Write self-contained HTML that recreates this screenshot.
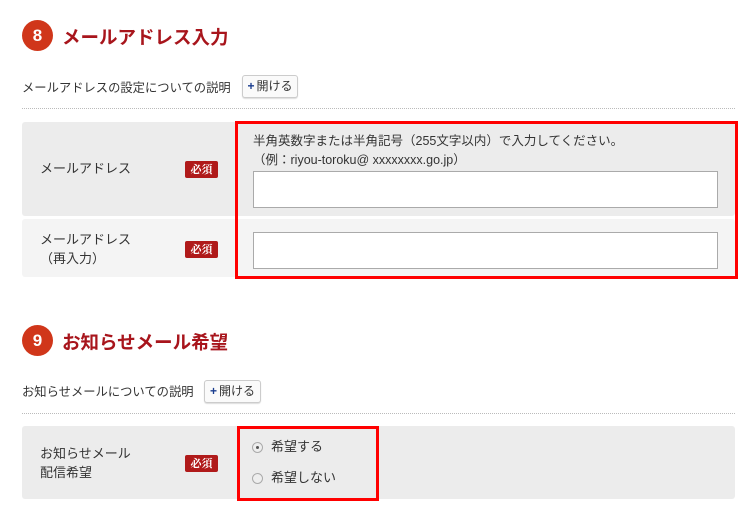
<!DOCTYPE html><html><head><meta charset="utf-8"><style>
body{margin:0;width:750px;height:514px;background:#fff;font-family:"Liberation Sans","Noto Sans CJK JP",sans-serif;color:#333;position:relative;overflow:hidden}
.a{position:absolute}
.c{width:31px;height:31px;border-radius:50%;background:#d0361a;color:#fff;font-weight:bold;font-size:17px;text-align:center;line-height:31px}
.t{color:#a8151c;font-weight:bold;font-size:18.5px;white-space:nowrap}
.d{font-size:12.3px;white-space:nowrap}
.b{border:1px solid #ccc;border-radius:3px;background:#fafafa;font-size:12px;height:21px;line-height:21px;text-align:center;box-shadow:0 1px 1px #ddd}
.b span{color:#1a3d8f;font-weight:bold;margin-right:2px}
.dot{left:22px;width:713px;border-top:1px dotted #bbb}
.badge{background:#b01a1a;color:#fff;font-size:11px;font-weight:bold;width:33px;height:17px;line-height:17px;text-align:center;border-radius:2px;font-family:"Noto Serif CJK SC",serif}
.lab{font-size:13px;line-height:19px}
.in{background:#fff;border:1px solid #aaa;left:253px;width:463px;height:35px}
.red{border:3px solid #f00;box-sizing:border-box}
.r{width:9px;height:9px;border-radius:50%;border:1px solid #aaa;background:#eee}
</style></head><body>
<div class="a c" style="left:22px;top:20px">8</div>
<div class="a t" style="left:62px;top:24px">メールアドレス入力</div>
<div class="a d" style="left:22px;top:78px">メールアドレスの設定についての説明</div>
<div class="a b" style="left:242px;top:75px;width:54px"><span>+</span>開ける</div>
<div class="a dot" style="top:108px"></div>
<div class="a" style="left:22px;top:122px;width:713px;height:94px;background:#ececec;border-radius:3px"></div>
<div class="a" style="left:22px;top:219px;width:713px;height:58px;background:#f4f4f4;border-radius:3px"></div>
<div class="a lab" style="left:40px;top:159px">メールアドレス</div>
<div class="a badge" style="left:185px;top:161px">必須</div>
<div class="a lab" style="left:40px;top:230px">メールアドレス<br>（再入力）</div>
<div class="a badge" style="left:185px;top:241px">必須</div>
<div class="a lab" style="left:253px;top:132px;font-size:12.5px">半角英数字または半角記号（255文字以内）で入力してください。<br>（例：riyou-toroku@ xxxxxxxx.go.jp）</div>
<div class="a in" style="top:171px"></div>
<div class="a in" style="top:232px"></div>
<div class="a red" style="left:235px;top:121px;width:503px;height:158px"></div>
<div class="a c" style="left:22px;top:325px">9</div>
<div class="a t" style="left:62px;top:329px">お知らせメール希望</div>
<div class="a d" style="left:22px;top:382px">お知らせメールについての説明</div>
<div class="a b" style="left:204px;top:380px;width:55px"><span>+</span>開ける</div>
<div class="a dot" style="top:413px"></div>
<div class="a" style="left:22px;top:426px;width:713px;height:73px;background:#ececec;border-radius:3px"></div>
<div class="a lab" style="left:40px;top:444px">お知らせメール<br>配信希望</div>
<div class="a badge" style="left:185px;top:455px">必須</div>
<div class="a r" style="left:252px;top:442px"><div style="width:3px;height:3px;background:#555;border-radius:50%;margin:3px"></div></div>
<div class="a lab" style="left:271px;top:437px">希望する</div>
<div class="a r" style="left:252px;top:473px"></div>
<div class="a lab" style="left:271px;top:468px">希望しない</div>
<div class="a red" style="left:237px;top:426px;width:142px;height:75px"></div>
</body></html>
